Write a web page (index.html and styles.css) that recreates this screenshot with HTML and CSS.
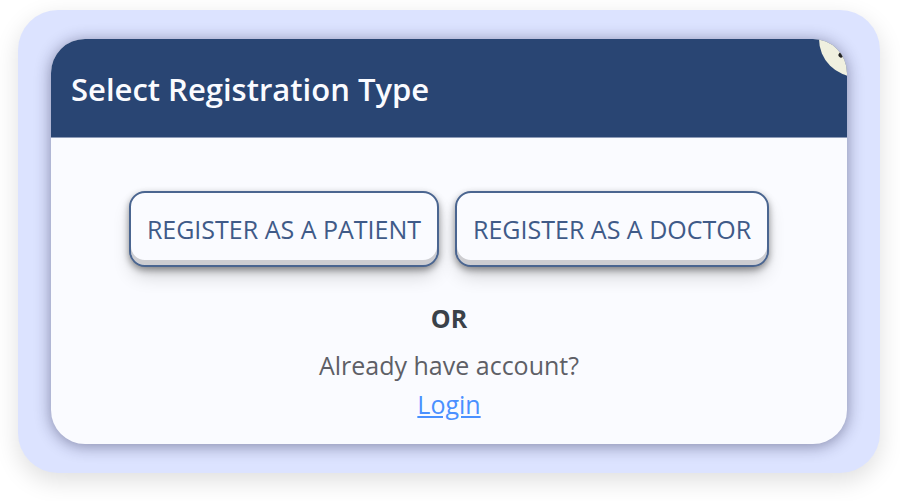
FILE: index.html
```html
<!DOCTYPE html>
<html lang="en">
<head>
    <meta charset="UTF-8">
    <meta name="viewport" content="width=device-width, initial-scale=1.0">
    <title>Select Registration Type</title>
    <link rel="stylesheet" href="styles.css">
</head>
<body>
    <div class="panel">
        <div class="modal" role="dialog" aria-labelledby="modalTitle">
            <div class="modal-header">
                <h1 id="modalTitle">Select Registration Type</h1>
                <button type="button" class="close-btn" aria-label="Close">
                    <svg viewBox="0 0 40 40" width="40" height="40" aria-hidden="true">
                        <path d="M4 4 L36 36 M36 4 L4 36" />
                    </svg>
                </button>
            </div>
            <div class="modal-body">
                <div class="choices">
                    <button type="button" class="register-btn">REGISTER AS A PATIENT</button>
                    <button type="button" class="register-btn">REGISTER AS A DOCTOR</button>
                </div>
                <p class="or">OR</p>
                <p class="account">Already have account?</p>
                <a href="#login" class="login-link">Login</a>
            </div>
        </div>
    </div>
</body>
</html>
```

FILE: styles.css
```css
* {
    margin: 0;
    padding: 0;
    box-sizing: border-box;
}

body {
    padding: 10px 20px 28px 18px;
    background: #ffffff;
    font-family: 'Segoe UI', 'Open Sans', 'Noto Sans', sans-serif;
}

.panel {
    padding: 29px 33px;
    background: #dce3ff;
    border-radius: 40px;
    box-shadow: 0 8px 24px rgba(0, 0, 0, 0.13);
}

.modal {
    position: relative;
    overflow: hidden;
    background: #fafbff;
    border-radius: 34px;
    box-shadow: 0 2px 16px rgba(20, 20, 60, 0.45);
}

.modal-header {
    padding: 31px 20px 29px;
    background: #294573;
    border-bottom: 1px solid #8d9bb8;
}

.modal-header h1 {
    font-size: 31px;
    font-weight: 600;
    line-height: 38px;
    color: #fafbff;
}

/* Round close button, cut off by the corner of the modal */
.close-btn {
    position: absolute;
    top: -38px;
    right: -48px;
    width: 76px;
    height: 76px;
    display: flex;
    justify-content: center;
    align-items: center;
    background: #f0f0df;
    border: none;
    border-radius: 50%;
    cursor: pointer;
}

.close-btn path {
    stroke: #222222;
    stroke-width: 5;
    stroke-linecap: round;
}

.modal-body {
    padding: 53px 20px 20px;
    display: flex;
    flex-direction: column;
    align-items: center;
    text-align: center;
    font-size: 25px;
}

.choices {
    display: flex;
    justify-content: center;
    gap: 16px;
    margin-bottom: 32px;
}

.register-btn {
    padding: 17px 16px 16px;
    font-family: inherit;
    font-size: 25px;
    line-height: 39px;
    color: #3f5a88;
    background: #fafbff;
    border: 2px solid #4a6590;
    border-radius: 16px;
    box-shadow: rgba(0, 0, 0, 0.4) 0 3px 7px, rgba(0, 0, 0, 0.2) 0 11px 20px -4px, inset rgba(0, 0, 0, 0.18) 0 -5px 0;
    cursor: pointer;
}

.or {
    margin-bottom: 8px;
    font-weight: 700;
    line-height: 39px;
    color: #3a4149;
}

.account {
    line-height: 39px;
    color: #5e5f66;
}

.login-link {
    line-height: 39px;
    color: #4a90ff;
}
```
